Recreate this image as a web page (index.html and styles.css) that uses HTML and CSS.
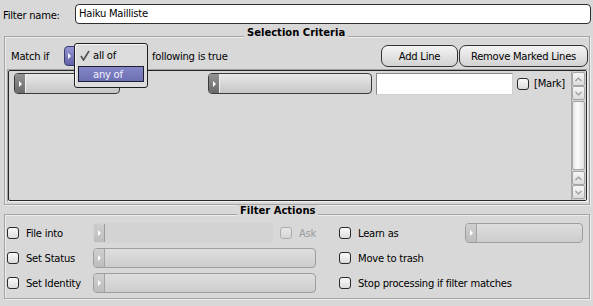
FILE: index.html
```html
<!DOCTYPE html>
<html lang="en">
<head>
  <meta charset="UTF-8">
  <title>Filter</title>
  <link rel="stylesheet" href="styles.css">
</head>
<body>

  <div class="window">
    <div class="name-row">
      <span class="name-label">Filter name:</span>
      <div class="text-field name-field">Haiku Mailliste</div>
    </div>

    <!-- Selection Criteria -->
    <div class="group criteria">
      <span class="group-title criteria-title">Selection Criteria</span>

      <div class="match-row">
        <span class="match-label">Match if</span>
        <div class="match-menu">
          <span class="menu-arrow active"></span>
          <div class="popup">
            <div class="popup-item">
              <svg class="tick" width="10" height="11" viewBox="0 0 10 11"><polyline points="1,6 3.5,10 9,1" fill="none" stroke="#555" stroke-width="1.7"/></svg>
              all of
            </div>
            <div class="popup-item selected">any of</div>
          </div>
        </div>
        <span class="match-rest">following is true</span>
        <div class="buttons">
          <button class="btn add-btn">Add Line</button>
          <button class="btn remove-btn">Remove Marked Lines</button>
        </div>
      </div>

      <div class="list">
        <div class="list-inner">
          <div class="lines">
            <div class="line">
              <div class="menu field-menu"><span class="menu-arrow"></span></div>
              <div class="menu op-menu"><span class="menu-arrow"></span></div>
              <div class="text-field value-field"></div>
              <span class="check"></span>
              <span class="mark">[Mark]</span>
            </div>
          </div>
          <div class="scrollbar">
            <span class="scroll-btn"><svg width="7" height="5" viewBox="0 0 7 5"><polyline points="0.5,4 3.5,1 6.5,4" fill="none" stroke="#9a9a9a" stroke-width="1.2"/></svg></span>
            <span class="scroll-btn"><svg width="7" height="5" viewBox="0 0 7 5"><polyline points="0.5,1 3.5,4 6.5,1" fill="none" stroke="#9a9a9a" stroke-width="1.2"/></svg></span>
            <span class="scroll-knob"></span>
            <span class="scroll-btn"><svg width="7" height="5" viewBox="0 0 7 5"><polyline points="0.5,4 3.5,1 6.5,4" fill="none" stroke="#9a9a9a" stroke-width="1.2"/></svg></span>
            <span class="scroll-btn"><svg width="7" height="5" viewBox="0 0 7 5"><polyline points="0.5,1 3.5,4 6.5,1" fill="none" stroke="#9a9a9a" stroke-width="1.2"/></svg></span>
          </div>
        </div>
      </div>
    </div>

    <!-- Filter Actions -->
    <div class="group actions">
      <span class="group-title actions-title">Filter Actions</span>

      <div class="action-row">
        <div class="action-left">
          <span class="check"></span>
          <span class="action-label">File into</span>
          <div class="menu disabled flat"><span class="menu-arrow"></span></div>
          <span class="check off"></span>
          <span class="ask">Ask</span>
        </div>
        <div class="action-right">
          <span class="check"></span>
          <span class="right-label learn-label">Learn as</span>
          <div class="menu disabled learn-menu"><span class="menu-arrow"></span></div>
        </div>
      </div>

      <div class="action-row">
        <div class="action-left">
          <span class="check"></span>
          <span class="action-label">Set Status</span>
          <div class="menu disabled wide"><span class="menu-arrow"></span></div>
        </div>
        <div class="action-right">
          <span class="check"></span>
          <span class="right-label">Move to trash</span>
        </div>
      </div>

      <div class="action-row">
        <div class="action-left">
          <span class="check"></span>
          <span class="action-label">Set Identity</span>
          <div class="menu disabled wide"><span class="menu-arrow"></span></div>
        </div>
        <div class="action-right">
          <span class="check"></span>
          <span class="right-label">Stop processing if filter matches</span>
        </div>
      </div>
    </div>
  </div>

</body>
</html>
```

FILE: styles.css
```css
body {
  margin: 0;
  background: #d8d8d8;
  font-family: 'DejaVu Sans', sans-serif;
  font-size: 10px;
  letter-spacing: -0.25px;
  color: #000;
}

.window {
  width: 593px;
  height: 306px;
  padding: 4px 2px 0 3px;
  box-sizing: border-box;
}

/* filter name */

.name-row {
  display: flex;
  align-items: center;
  height: 20px;
}

.name-label {
  width: 72px;
  padding-top: 3px;
}

.text-field {
  background: #fff;
  border: 1px solid #2e2e2e;
  border-radius: 4px;
  box-sizing: border-box;
}

.name-field {
  flex: 1;
  height: 20px;
  padding: 0 3px;
  line-height: 17px;
}

/* group boxes */

.group {
  position: relative;
  margin: 0 1px;
  border: 1px solid #a4a4a4;
  box-shadow: inset 1px 1px 0 #ededed, 1px 1px 0 #ededed;
}

.group-title {
  position: absolute;
  top: -10px;
  padding: 0 3px;
  background: #d8d8d8;
  font-weight: bold;
  letter-spacing: 0;
  line-height: 12px;
}

.criteria-title { left: 239px; }
.actions-title { left: 232px; }

.criteria {
  margin-top: 12px;
  height: 169px;
  box-sizing: border-box;
  padding: 8px 1px 2px;
}

.actions {
  margin-top: 9px;
  height: 85px;
  box-sizing: border-box;
  padding: 8px 2px 0;
}

/* match row */

.match-row {
  display: flex;
  align-items: center;
  height: 22px;
}

.match-label {
  width: 53px;
  margin-left: 5px;
}

.match-menu {
  position: relative;
  display: flex;
  width: 83px;
  height: 20px;
}

.match-rest {
  margin-left: 5px;
}

.buttons {
  display: flex;
  gap: 1px;
  margin-left: auto;
}

.btn {
  height: 22px;
  padding: 0;
  border: 1px solid #333;
  border-radius: 7px;
  background: linear-gradient(#f4f4f4, #d2d2d2);
  font: inherit;
  letter-spacing: inherit;
  color: #000;
}

.add-btn { width: 77px; }
.remove-btn { width: 129px; }

/* popup menu */

.popup {
  position: absolute;
  top: -3px;
  left: 10px;
  width: 74px;
  height: 45px;
  box-sizing: border-box;
  padding: 3px 3px 0;
  background: #dcdcdc;
  border: 1px solid #1e1e1e;
  border-radius: 3px;
  box-shadow: inset 1px 1px 0 #f6f6f6;
}

.popup-item {
  display: flex;
  align-items: center;
  height: 16px;
  padding-left: 15px;
}

.popup-item:first-child {
  position: relative;
}

.tick {
  position: absolute;
  left: 2px;
  top: 3px;
}

.popup-item.selected {
  margin-top: 3px;
  box-sizing: border-box;
  border: 1px solid #1e1e2e;
  background: linear-gradient(#8486c6, #6c6fb2);
  color: #f2f2ff;
  padding-left: 14px;
}

/* menu fields */

.menu {
  display: flex;
  box-sizing: border-box;
  height: 21px;
  border: 1px solid #3a3a3a;
  border-radius: 4px;
  background: linear-gradient(#e8e8e8, #c6c6c6);
  overflow: hidden;
}

.menu-arrow {
  display: flex;
  align-items: center;
  justify-content: center;
  width: 10px;
  flex: none;
  background: linear-gradient(#939393, #6a6a6a);
  border-right: 1px solid #f0f0f0;
}

.menu-arrow::after {
  content: "";
  border-left: 3px solid #fff;
  border-top: 3px solid transparent;
  border-bottom: 3px solid transparent;
}

.menu-arrow.active {
  width: 11px;
  height: 20px;
  border: 1px solid #3a3a6a;
  border-radius: 4px 0 0 4px;
  box-sizing: border-box;
  background: linear-gradient(#9496d6, #5f62a8);
}

.menu.disabled {
  height: 20px;
  border-color: #9e9e9e;
  background: linear-gradient(#dedede, #cdcdcd);
}

.menu.disabled .menu-arrow {
  background: linear-gradient(#cfcfcf, #bdbdbd);
  border-right: 1px solid #a4a4a4;
}

.menu.flat {
  width: 180px;
  border-color: transparent;
  background: #d3d3d3;
}

.menu.flat .menu-arrow {
  border: 1px solid #9e9e9e;
  border-radius: 4px 0 0 4px;
  margin: -1px 0 -1px -1px;
}

.menu.wide { width: 223px; }
.learn-menu { width: 118px; }

/* list of criteria */

.list {
  margin-top: 2px;
  margin-left: 1px;
  height: 133px;
  box-sizing: border-box;
  border: 1px solid;
  border-color: #a0a0a0 #f2f2f2 #f2f2f2 #a0a0a0;
}

.list-inner {
  display: flex;
  height: 100%;
  box-sizing: border-box;
  border: 1px solid #262626;
  border-radius: 2px;
}

.lines {
  flex: 1;
  padding: 1px 0 0 5px;
}

.line {
  display: flex;
  align-items: center;
  height: 23px;
}

.field-menu { width: 106px; margin-right: 88px; }
.op-menu { width: 164px; margin-right: 4px; }

.value-field {
  width: 137px;
  height: 22px;
  margin-right: 4px;
  border-color: #8c8c8c #d0d0d0 #d0d0d0 #8c8c8c;
  border-radius: 0;
}

.mark { margin-left: 5px; }

.scrollbar {
  display: flex;
  flex-direction: column;
  width: 15px;
  padding: 1px 1px 1px 0;
  box-sizing: border-box;
  border-left: 1px solid #a8a8a8;
  background: #d0d0d0;
}

.scroll-btn {
  display: flex;
  align-items: center;
  justify-content: center;
  height: 14px;
  flex: none;
  box-sizing: border-box;
  border: 1px solid #a6a6a6;
  border-radius: 2px;
  background: linear-gradient(#f6f6f6, #dcdcdc);
}

.scroll-knob {
  flex: 1;
  margin: 1px 0;
  border: 1px solid #a6a6a6;
  border-radius: 2px;
  background: linear-gradient(to right, #e4e4e4, #fbfbfb 40%, #e2e2e2);
}

/* check boxes */

.check {
  width: 12px;
  height: 12px;
  flex: none;
  box-sizing: border-box;
  border: 1px solid #2a2a2a;
  border-radius: 3px;
  background: linear-gradient(#fafafa, #dcdcdc);
}

.check.off {
  border-color: #acacac;
  margin-left: 7px;
  background: linear-gradient(#e6e6e6, #d6d6d6);
}

/* actions */

.action-row {
  display: flex;
  align-items: center;
  height: 20px;
  margin-bottom: 5px;
}

.action-left {
  display: flex;
  align-items: center;
  width: 332px;
}

.action-label {
  width: 67px;
  margin-left: 7px;
}

.ask {
  margin-left: 7px;
  color: #9a9a9a;
}

.action-right {
  display: flex;
  align-items: center;
}

.right-label {
  margin-left: 7px;
}

.learn-label {
  width: 107px;
}
```
